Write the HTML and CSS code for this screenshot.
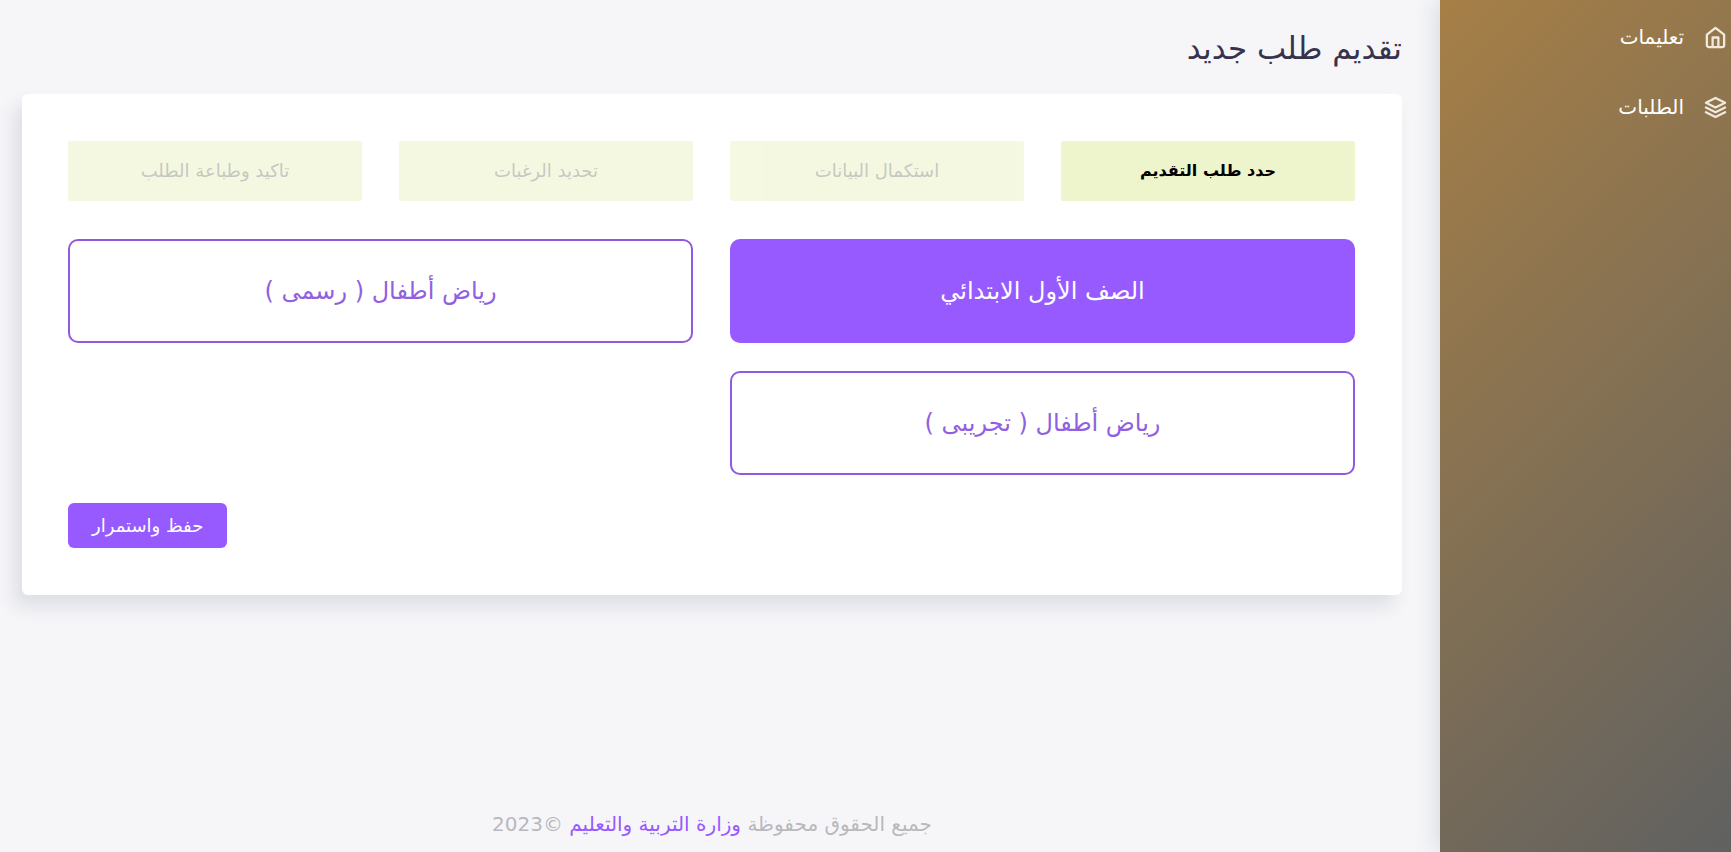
FILE: index.html
```html
<!DOCTYPE html>
<html lang="ar" dir="rtl">
<head>
    <meta charset="UTF-8">
    <meta name="viewport" content="width=device-width, initial-scale=1">
    <title>تقديم طلب جديد</title>
    <link rel="stylesheet" href="styles.css">
</head>
<body>
    <nav class="sidebar">
        <ul class="menu">
            <li>
                <a href="#help" class="menu-link">
                    <svg class="menu-icon" viewBox="0 0 24 24">
                        <path d="M3 9l9-7 9 7v11a2 2 0 0 1-2 2H5a2 2 0 0 1-2-2z"/>
                        <path d="M9 22V12h6v10"/>
                    </svg>
                    <span>تعليمات</span>
                </a>
            </li>
            <li>
                <a href="#requests" class="menu-link">
                    <svg class="menu-icon" viewBox="0 0 24 24">
                        <path d="M12 2L2 7l10 5 10-5-10-5z"/>
                        <path d="M2 17l10 5 10-5"/>
                        <path d="M2 12l10 5 10-5"/>
                    </svg>
                    <span>الطلبات</span>
                </a>
            </li>
        </ul>
    </nav>

    <div class="content">
        <main>
            <h1 class="page-title">تقديم طلب جديد</h1>
            <form class="card">
                <!-- Wizard steps -->
                <ol class="steps">
                    <li class="step active">حدد طلب التقديم</li>
                    <li class="step">استكمال البيانات</li>
                    <li class="step">تحديد الرغبات</li>
                    <li class="step">تاكيد وطباعة الطلب</li>
                </ol>
                <!-- Request type -->
                <div class="options">
                    <button type="button" class="option selected">الصف الأول الابتدائي</button>
                    <button type="button" class="option">رياض أطفال ( رسمى )</button>
                    <button type="button" class="option">رياض أطفال ( تجريبى )</button>
                </div>
                <div class="actions">
                    <button type="submit" class="save-button">حفظ واستمرار</button>
                </div>
            </form>
        </main>
        <footer class="footer">جميع الحقوق محفوظة <a href="#ministry">وزارة التربية والتعليم</a> ©2023</footer>
    </div>
</body>
</html>
```
FILE: styles.css
```css
* {
    box-sizing: border-box;
}

body {
    margin: 0;
    min-height: 100vh;
    display: flex;
    background-color: #f6f6f9;
    font-family: "DejaVu Sans", sans-serif;
    font-size: 18px;
    line-height: 28px;
}

button {
    font-family: inherit;
    cursor: pointer;
}

a {
    text-decoration: none;
}

/* Sidebar */
.sidebar {
    flex: 0 0 291px;
    padding-top: 2px;
    background: linear-gradient(135deg, #a67f46, #606161);
    box-shadow: 0 0 24px 0 rgba(34, 50, 60, 0.18);
}

.menu {
    list-style: none;
    margin: 0;
    padding: 0;
}

.menu-link {
    display: flex;
    align-items: center;
    gap: 20px;
    height: 70px;
    padding: 0 4px;
    font-size: 20px;
    color: #fff;
}

.menu-icon {
    width: 23px;
    height: 23px;
    fill: none;
    stroke: #f2e9dd;
    stroke-width: 2.4;
    stroke-linecap: round;
    stroke-linejoin: round;
}

/* Content */
.content {
    flex: 1;
    display: flex;
    flex-direction: column;
    justify-content: space-between;
    padding: 26px 38px 14px 22px;
}

.page-title {
    margin: 0 0 24px;
    font-size: 31px;
    font-weight: normal;
    line-height: 44px;
    color: #37334c;
}

.card {
    padding: 47px 47px 47px 46px;
    background-color: #fff;
    border-radius: 6px;
    box-shadow: -8px 12px 18px 0 rgba(25, 42, 60, 0.11);
}

.steps {
    list-style: none;
    margin: 0 0 38px;
    padding: 0;
    display: grid;
    grid-template-columns: repeat(4, 1fr);
    gap: 37px;
}

.step {
    padding: 16px;
    background-color: #eef5cd;
    border-radius: 2px;
    text-align: center;
    color: #000;
    opacity: 0.6;
}

.step:not(.active) {
    color: #a0a49a;
}

.step.active {
    font-size: 16px;
    font-weight: bold;
    opacity: 1;
}

.options {
    display: grid;
    grid-template-columns: repeat(2, 1fr);
    gap: 28px 37px;
}

.option {
    height: 104px;
    background-color: #fff;
    border: 2px solid #9059df;
    border-radius: 10px;
    font-size: 24px;
    color: #9060e0;
}

.option.selected {
    background-color: #965aff;
    border-color: #965aff;
    color: #fff;
}

.actions {
    display: flex;
    justify-content: flex-end;
    margin-top: 28px;
}

.save-button {
    height: 45px;
    padding: 0 24px;
    background-color: #965aff;
    border: none;
    border-radius: 6px;
    font-size: 18px;
    color: #fff;
}

.footer {
    font-size: 20px;
    text-align: center;
    color: #b8b8bd;
}

.footer a {
    color: #965aff;
}
```
